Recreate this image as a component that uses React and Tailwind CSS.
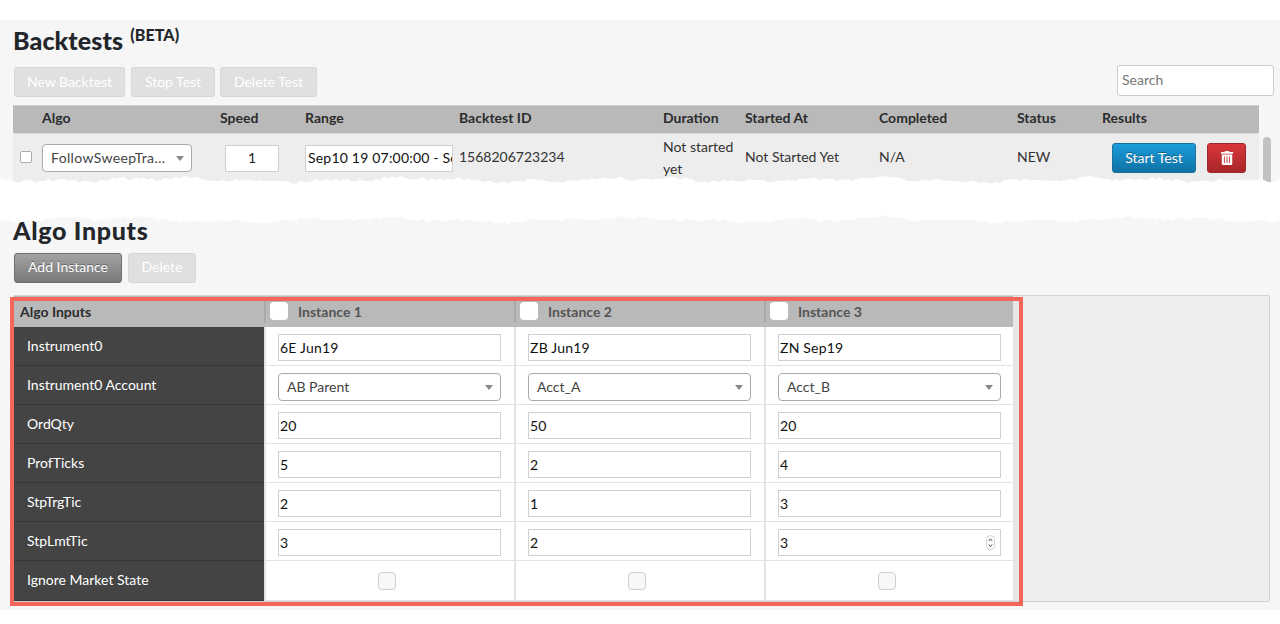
import React from 'react';
import { FaTrashAlt } from 'react-icons/fa';

const columns = [
  { label: '', w: 'w-[29px]' },
  { label: 'Algo', w: 'w-[178px]' },
  { label: 'Speed', w: 'w-[85px]' },
  { label: 'Range', w: 'w-[154px]' },
  { label: 'Backtest ID', w: 'w-[204px]' },
  { label: 'Duration', w: 'w-[82px]' },
  { label: 'Started At', w: 'w-[134px]' },
  { label: 'Completed', w: 'w-[138px]' },
  { label: 'Status', w: 'w-[85px]' },
  { label: 'Results', w: 'w-[157px]' },
];

const instanceWidths = ['w-[250px]', 'w-[250px]', 'w-[249px]'];

const inputRows = [
  { name: 'Instrument0', kind: 'text', values: ['6E Jun19', 'ZB Jun19', 'ZN Sep19'] },
  { name: 'Instrument0 Account', kind: 'select', values: ['AB Parent', 'Acct_A', 'Acct_B'] },
  { name: 'OrdQty', kind: 'text', values: ['20', '50', '20'] },
  { name: 'ProfTicks', kind: 'text', values: ['5', '2', '4'] },
  { name: 'StpTrgTic', kind: 'text', values: ['2', '1', '3'] },
  { name: 'StpLmtTic', kind: 'text', values: ['3', '2', '3'], spinner: true },
  { name: 'Ignore Market State', kind: 'check', values: [0, 1, 2] },
];

// jagged edge of the torn paper between the two sections
function tearPoints() {
  const top = [];
  const bottom = [];
  for (let x = 0; x <= 1280; x += 4) {
    const n = Math.sin(x * 12.9898) * 43758.5453;
    const r = n - Math.floor(n);
    top.push(`${x},${6 + Math.sin(x / 37) * 1.5 + Math.sin(x / 11) * 1 + r * 3.5}`);
    bottom.push(`${x},${46 + Math.sin(x / 41 + 2) * 1.5 + Math.sin(x / 13) * 1.2 + r * 3.5}`);
  }
  return [...top, ...bottom.reverse()].join(' ');
}

function GhostButton({ children, className }) {
  return (
    <button className={`h-[30px] rounded-[3px] border border-[#d6d6d6] bg-[#e0e0e0] text-sm text-white ${className}`}>
      {children}
    </button>
  );
}

function Caret() {
  return <span className="border-x-[4px] border-t-[5px] border-x-transparent border-t-[#888]" />;
}

function Spinner() {
  return (
    <svg className="absolute right-[17px] top-[13px]" width="10" height="16" viewBox="0 0 10 16">
      <rect x="0.5" y="0.5" width="8" height="14" rx="4" fill="#fff" stroke="#d4d4d4" />
      <path d="M2.8 6 L4.5 3.8 L6.2 6 M2.8 9.5 L4.5 11.7 L6.2 9.5" fill="none" stroke="#555" strokeWidth="1" />
    </svg>
  );
}

function InputCell({ row, value }) {
  if (row.kind === 'check') {
    return (
      <div className="pl-[100px] pt-[4px]">
        <span className="block h-[18px] w-[18px] rounded-[4px] border border-[#cfcfcf] bg-[#f8f8f8]" />
      </div>
    );
  }
  if (row.kind === 'select') {
    return (
      <div className="flex h-[28px] w-[223px] items-center justify-between rounded-[4px] border border-[#aaa] bg-white pl-2 pr-[7px] text-sm text-[#444]">
        {value}
        <Caret />
      </div>
    );
  }
  return (
    <input
      readOnly
      value={value}
      className="h-[27px] w-[223px] border border-[#d0d0d0] bg-white pb-px pl-[1px] text-sm tracking-[0.2px] text-[#111] outline-none"
    />
  );
}

export default function App() {
  return (
    <div className="relative h-[624px] w-[1280px] overflow-hidden bg-white pt-5 font-['Lato',sans-serif] text-[#333]">
      <div className="h-[590px] bg-[#f6f6f6]">
        {/* Backtests */}
        <div className="h-[170px] overflow-hidden pl-[13px] pt-[2px]">
          <h1 className="flex h-[39px] items-start text-[25px] leading-[36px] font-black tracking-[0.1px] text-[#22262b]">
            Backtests
            <sup className="top-0 ml-[7px] text-[16px] leading-[26px] font-black">(BETA)</sup>
          </h1>
          <div className="mt-[6px] flex items-start pl-px">
            <GhostButton className="w-[111px]">New Backtest</GhostButton>
            <GhostButton className="ml-[6px] w-[84px]">Stop Test</GhostButton>
            <GhostButton className="ml-[5px] w-[97px]">Delete Test</GhostButton>
            <input
              readOnly
              placeholder="Search"
              className="ml-[800px] -mt-[2px] h-[31px] w-[157px] rounded-[3px] border border-[#ccc] bg-white pb-[2px] pl-[4px] text-sm outline-none placeholder:text-[#777]"
            />
          </div>
          <div className="mt-[8px] flex">
            <div className="w-[1246px]">
              <div className="flex h-[28px] items-center border-t border-[#d0d0d0] bg-[#b9b9b9] pb-[4px] text-sm font-bold text-[#2c2c2c]">
                {columns.map((c) => (
                  <div key={c.label || 'check'} className={c.w}>{c.label}</div>
                ))}
              </div>
              <div className="flex h-[50px] items-center border-t border-[#dcdcdc] bg-[#ededed] pb-px text-sm">
                <div className="w-[29px] pl-[7px]">
                  <span className="block h-[12px] w-[12px] -translate-y-px rounded-[2px] border border-[#aaa] bg-white" />
                </div>
                <div className="w-[178px]">
                  <div className="flex h-[28px] w-[150px] items-center justify-between rounded-[4px] border border-[#aaa] bg-white pl-2 pr-[7px] tracking-[0.35px] text-[#444]">
                    FollowSweepTra…
                    <Caret />
                  </div>
                </div>
                <div className="w-[85px] pl-[5px]">
                  <input readOnly value="1" className="h-[27px] w-[54px] border border-[#d0d0d0] bg-white pb-px text-center text-sm text-[#222]" />
                </div>
                <div className="w-[154px]">
                  <input readOnly value="Sep10 19 07:00:00 - Sep10 19 15:00:00" className="h-[27px] w-[148px] border border-[#d0d0d0] bg-white pb-px pl-[2px] text-sm tracking-[0.2px] text-[#111]" />
                </div>
                <div className="w-[204px] pb-[2px]">1568206723234</div>
                <div className="w-[82px] leading-[22px]">Not started yet</div>
                <div className="w-[134px] pb-[2px]">Not Started Yet</div>
                <div className="w-[138px] pb-[2px]">N/A</div>
                <div className="w-[85px] pb-[2px]">NEW</div>
                <div className="flex w-[157px] items-center pl-[10px]">
                  <button className="h-[30px] w-[84px] rounded-[3px] border border-[#1b6f9c] bg-gradient-to-b from-[#1a9ddb] to-[#0f72a6] pb-px text-sm text-white [text-shadow:0_-1px_0_rgba(0,0,0,0.35)]">
                    Start Test
                  </button>
                  <button className="ml-[11px] flex h-[30px] w-[39px] items-center justify-center rounded-[3px] border border-[#9c2a2a] bg-gradient-to-b from-[#d9363a] to-[#a82628] text-white">
                    <FaTrashAlt size={14} />
                  </button>
                </div>
              </div>
            </div>
            <div className="ml-[4px] mt-[32px] h-[60px] w-[8px] rounded-full bg-[#c2c2c2]" />
          </div>
        </div>

        {/* Algo Inputs */}
        <div className="pl-[13px] pt-[22px]">
          <h1 className="h-[41px] text-[25px] leading-[36px] font-black tracking-[0.7px] text-[#22262b]">Algo Inputs</h1>
          <div className="flex pl-px">
            <button className="h-[30px] w-[108px] rounded-[3px] border border-[#6e6e6e] bg-gradient-to-b from-[#a3a3a3] to-[#7a7a7a] pb-[2px] text-sm text-white [text-shadow:0_-1px_0_rgba(0,0,0,0.35)]">
              Add Instance
            </button>
            <GhostButton className="ml-[6px] w-[68px] pb-[2px]">Delete</GhostButton>
          </div>
          <div className="mt-[12px] flex h-[307px] w-[1257px] rounded-[2px] border border-[#d2d2d2] bg-[#ededed]">
            <div className="w-[999px] bg-white">
              <div className="flex h-[31px] border-t-[5px] border-[#b9b9b9] bg-[#b9b9b9] pb-[4px] text-sm font-bold">
                <div className="flex w-[250px] items-center pl-[6px] text-[#2c2c2c]">Algo Inputs</div>
                {['Instance 1', 'Instance 2', 'Instance 3'].map((name, col) => (
                  <div key={name} className={`flex items-center border-l-2 border-[#a9a9a9] pl-[4px] text-[#555] ${instanceWidths[col]}`}>
                    <span className="block h-[18px] w-[18px] -translate-y-px rounded-[4px] bg-white" />
                    <span className="ml-[10px]">{name}</span>
                  </div>
                ))}
              </div>
              {inputRows.map((row, i) => (
                <div key={row.name} className={`flex ${i === inputRows.length - 1 ? 'h-[40px]' : 'h-[39px]'}`}>
                  <div className="w-[250px] border-b border-[#353535] bg-[#444] pl-[13px] pt-[9px] text-sm text-white">
                    {row.name}
                  </div>
                  {row.values.map((value, col) => (
                    <div key={col} className={`relative border-b border-l-2 border-[#e2e2e2] pl-[12px] pt-[7px] ${instanceWidths[col]}`}>
                      <InputCell row={row} value={value} />
                      {row.spinner && col === 2 ? <Spinner /> : null}
                    </div>
                  ))}
                </div>
              ))}
            </div>
            <div className="w-[6px] bg-[#e6e6e6]" />
          </div>
        </div>
      </div>

      {/* torn paper edge */}
      <svg className="absolute left-0 top-[172px]" width="1280" height="60" viewBox="0 0 1280 60">
        <polygon points={tearPoints()} fill="#fff" />
      </svg>

      {/* red callout */}
      <div className="pointer-events-none absolute left-[10px] top-[297px] h-[309px] w-[1013px] border-[4px] border-[#f4655a]" />
    </div>
  );
}
